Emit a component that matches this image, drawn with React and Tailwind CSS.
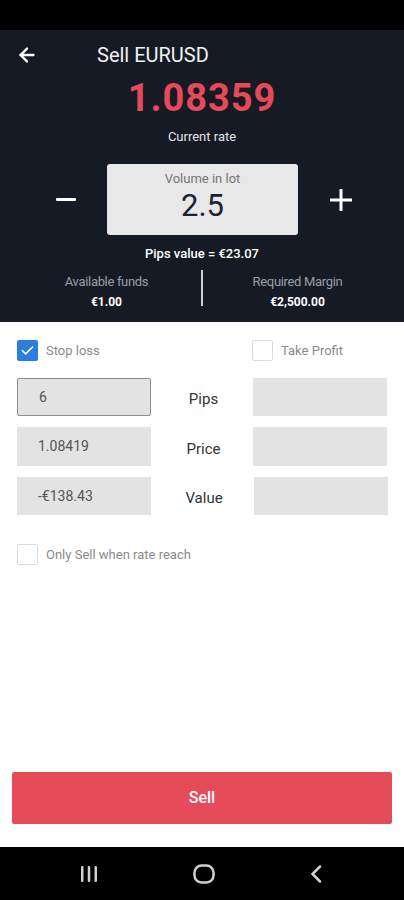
import { ArrowLeft } from "lucide-react";

function Box({ checked, label }) {
  return (
    <div className="flex items-center">
      <div
        className={
          checked
            ? "w-[21px] h-[21px] rounded-[2px] bg-[#2b7de0] flex items-center justify-center"
            : "w-[21px] h-[21px] rounded-[2px] border-[1.5px] border-[#dcdcdc] bg-white"
        }
      >
        {checked ? (
          <svg width="15" height="15" viewBox="0 0 24 24" fill="none">
            <path d="M4 12.5l5 5L20 6.5" stroke="white" strokeWidth="2.6" strokeLinecap="square" />
          </svg>
        ) : null}
      </div>
      <span className="ml-[8px] text-[13px] text-[#8a8a8a]">{label}</span>
    </div>
  );
}

function Field({ value, focused, h = "h-[38px]" }) {
  return (
    <div
      className={
        "w-[134px] " +
        h +
        " bg-[#e3e3e3] flex items-center pl-[21px] text-[14px] text-[#555] " +
        (focused ? "border border-[#8c8c8c] rounded-[2px]" : "")
      }
    >
      {value}
    </div>
  );
}

export default function App() {
  return (
    <div className="w-[404px] h-[900px] flex flex-col bg-white" style={{ fontFamily: "Roboto, 'Liberation Sans', sans-serif" }}>
      <div className="h-[30px] bg-black" />

      {/* header */}
      <div className="h-[292px] bg-[#161a25] flex flex-col items-center text-white">
        <div className="w-full h-[50px] flex items-center pl-[16px]">
          <ArrowLeft size={22} strokeWidth={2.6} />
          <span className="ml-[59px] text-[20px] text-[#f2f2f2]">Sell EURUSD</span>
        </div>
        <div className="text-[38px] leading-[36px] font-bold text-[#e64a59] tracking-wide">1.08359</div>
        <div className="mt-[13px] text-[13px] leading-[16px] text-[#e4e4e4]">Current rate</div>

        <div className="mt-[19px] w-full flex items-center">
          <div className="w-[107px] flex justify-center pl-[24px]">
            <div className="w-[20px] h-[3px] bg-white rounded-[1px]" />
          </div>
          <div className="w-[191px] h-[71px] bg-[#e8e8e8] rounded-[3px] flex flex-col items-center">
            <div className="mt-[6px] text-[13px] leading-[18px] text-[#777]">Volume in lot</div>
            <div className="text-[31px] leading-[36px] text-[#1d2235]">2.5</div>
          </div>
          <div className="flex-1 flex justify-center pr-[20px]">
            <svg width="22" height="22" viewBox="0 0 22 22">
              <rect x="9.5" y="0" width="3" height="22" fill="white" />
              <rect x="0" y="9.5" width="22" height="3" fill="white" />
            </svg>
          </div>
        </div>

        <div className="mt-[11px] text-[13px] leading-[16px] font-medium">Pips value = €23.07</div>

        <div className="mt-[8px] w-full px-[12px] flex">
          <div className="flex-1 flex flex-col items-center pt-[4px]">
            <div className="text-[13px] leading-[16px] text-[#9b9ea6] tracking-tight">Available funds</div>
            <div className="mt-[4px] text-[12px] leading-[16px] font-bold">€1.00</div>
          </div>
          <div className="w-[2px] h-[36px] bg-[#d0d0d0]" />
          <div className="flex-1 flex flex-col items-center pt-[4px]">
            <div className="text-[13px] leading-[16px] text-[#9b9ea6] tracking-tight">Required Margin</div>
            <div className="mt-[4px] text-[12px] leading-[16px] font-bold">€2,500.00</div>
          </div>
        </div>
      </div>

      {/* body */}
      <div className="flex-1 flex flex-col px-[17px]">
        <div className="mt-[18px] flex">
          <div className="w-[235px]">
            <Box checked label="Stop loss" />
          </div>
          <Box label="Take Profit" />
        </div>

        <div className="mt-[17px] flex flex-col gap-[11px]">
          <div className="flex items-center">
            <Field value="6" focused />
            <div className="flex-1 text-center text-[15px] text-[#333] pt-[5px] pl-[3px]">Pips</div>
            <Field />
          </div>
          <div className="flex items-center">
            <Field value="1.08419" h="h-[39px]" />
            <div className="flex-1 text-center text-[15px] text-[#333] pt-[5px] pl-[3px]">Price</div>
            <Field h="h-[39px]" />
          </div>
          <div className="flex items-center">
            <Field value="-€138.43" />
            <div className="flex-1 text-center text-[15px] text-[#333] pt-[5px] pl-[3px]">Value</div>
            <div className="mr-[-1px]">
              <Field />
            </div>
          </div>
        </div>

        <div className="mt-[29px]">
          <Box label="Only Sell when rate reach" />
        </div>

        <div className="mt-auto mb-[23px] mx-[-5px] h-[52px] rounded-[2px] bg-[#e64b59] flex items-center justify-center text-white text-[16px] font-medium">
          Sell
        </div>
      </div>

      {/* nav bar */}
      <div className="h-[53px] bg-black flex items-center justify-between px-[80px] text-[#cfcfcf]">
        <svg width="18" height="16" viewBox="0 0 18 16">
          <rect x="1" y="0" width="2.5" height="16" rx="1" fill="#cfcfcf" />
          <rect x="7.75" y="0" width="2.5" height="16" rx="1" fill="#cfcfcf" />
          <rect x="14.5" y="0" width="2.5" height="16" rx="1" fill="#cfcfcf" />
        </svg>
        <svg width="22" height="20" viewBox="0 0 22 20">
          <rect x="1.5" y="1.5" width="19" height="17" rx="7" fill="none" stroke="#cfcfcf" strokeWidth="2.5" />
        </svg>
        <svg width="12" height="18" viewBox="0 0 12 18" className="mr-[2px]">
          <path d="M10 1.5L2.5 9l7.5 7.5" fill="none" stroke="#cfcfcf" strokeWidth="2.5" strokeLinecap="round" />
        </svg>
      </div>
    </div>
  );
}
